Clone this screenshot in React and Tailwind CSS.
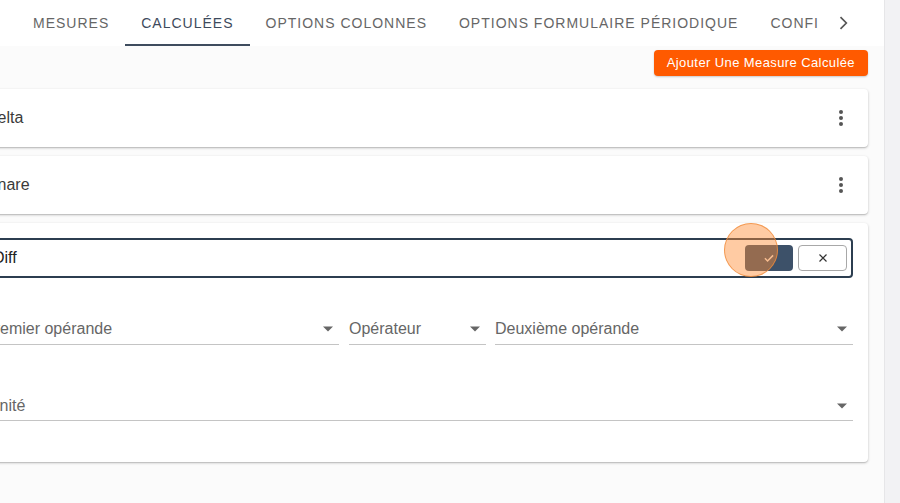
import React from "react";

const tabs = ["Mesures", "Calculées", "Options colonnes", "Options formulaire périodique", "Configuration"];

function Kebab() {
  return (
    <svg width="24" height="24" viewBox="0 0 24 24" fill="#555">
      <circle cx="12" cy="6" r="2" />
      <circle cx="12" cy="12" r="2" />
      <circle cx="12" cy="18" r="2" />
    </svg>
  );
}

function Caret() {
  return (
    <svg width="12" height="8" viewBox="0 0 12 8" fill="#666">
      <path d="M1 1.5h10L6 6.5z" />
    </svg>
  );
}

function SelectField({ label, className }) {
  return (
    <div className={`flex items-center h-[33px] pt-[2px] border-b border-[#c4c4c4] ${className}`}>
      <span className="flex-1 truncate text-[16px] text-[#666]">{label}</span>
      <span className="mr-[5px] flex items-center">
        <Caret />
      </span>
    </div>
  );
}

function MeasureCard({ name }) {
  return (
    <div className="h-[58px] bg-white rounded-[4px] shadow-[0_1px_3px_rgba(0,0,0,0.2),0_1px_1px_rgba(0,0,0,0.12)] flex items-center pl-4 pr-[15px]">
      <span className="flex-1 text-[16px] text-[#3a3a3a]">{name}</span>
      <Kebab />
    </div>
  );
}

export default function App() {
  return (
    <div
      className="w-[900px] h-[503px] overflow-hidden flex bg-[#fbfbfb]"
      style={{ fontFamily: '"Liberation Sans", Arial, sans-serif' }}
    >
      <div className="w-[914px] shrink-0 -ml-[30px] flex flex-col">
        {/* Tabs */}
        <div className="h-[46px] flex items-stretch pl-[47px] pr-[23px] bg-white">
          <div className="flex-1 flex overflow-hidden mr-[6px]">
            {tabs.map((t, i) => (
              <div
                key={t}
                className={`shrink-0 px-4 flex items-center uppercase text-[14px] tracking-[1px] ${
                  i === 1
                    ? "text-[#3d4a5c] border-b-2 border-[#3e4c5e] pt-[2px]"
                    : "text-[#666]"
                }`}
              >
                {t}
              </div>
            ))}
          </div>
          <div className="w-[36px] shrink-0 flex items-center justify-center">
            <svg width="20" height="20" viewBox="0 0 24 24" fill="none" stroke="#555" strokeWidth="2">
              <path d="M9 5l7 7-7 7" />
            </svg>
          </div>
        </div>

        <div className="flex-1 pr-[16px]">
          <div className="flex justify-end mt-1">
            <button className="h-[26px] px-[13px] rounded-[4px] bg-[#ff5a00] text-white text-[13px] tracking-[0.4px] shadow-[0_1px_2px_rgba(0,0,0,0.2)]">
              Ajouter Une Measure Calculée
            </button>
          </div>

          <div className="mt-[13px] flex flex-col gap-[9px]">
            <MeasureCard name="Delta" />
            <MeasureCard name="Unare" />

            {/* Expanded card */}
            <div className="relative bg-white rounded-[4px] shadow-[0_1px_3px_rgba(0,0,0,0.2),0_1px_1px_rgba(0,0,0,0.12)] pl-[14px] pr-[15px] pt-[15px] pb-[41px]">
              <div className="h-[40px] border-2 border-[#2c3e50] rounded-[4px] flex items-center pl-[7px] pr-[4px]">
                <span className="flex-1 text-[16px] text-[#222]">Diff</span>
                <button className="w-[48px] h-[26px] rounded-[4px] bg-[#3d5169] flex items-center justify-center">
                  <svg width="14" height="14" viewBox="0 0 24 24" fill="none" stroke="#f3e6dc" strokeWidth="2.5">
                    <path d="M5 12.5l4.5 4.5L19 7.5" />
                  </svg>
                </button>
                <button className="ml-[5px] w-[49px] h-[26px] rounded-[4px] border border-[#a8a8a8] bg-white flex items-center justify-center">
                  <svg width="14" height="14" viewBox="0 0 24 24" fill="none" stroke="#333" strokeWidth="2">
                    <path d="M6 6l12 12M18 6L6 18" />
                  </svg>
                </button>
              </div>
              {/* click indicator */}
              <div className="absolute left-[754px] top-0 w-[54px] h-[54px] rounded-full bg-[rgba(255,140,50,0.45)] border-[1.5px] border-[rgba(240,140,60,0.8)] pointer-events-none" />

              <div className="mt-[34px] flex">
                <SelectField label="Premier opérande" className="w-[355px]" />
                <SelectField label="Opérateur" className="ml-[10px] w-[137px]" />
                <SelectField label="Deuxième opérande" className="ml-[9px] flex-1" />
              </div>

              <div className="mt-[43px]">
                <SelectField label="Unité" className="pl-[4px] pt-[4px]" />
              </div>
            </div>
          </div>
        </div>
      </div>
      <div className="w-[16px] shrink-0 bg-[#f2f2f4] border-l border-[#e6e6e8]" />
    </div>
  );
}
